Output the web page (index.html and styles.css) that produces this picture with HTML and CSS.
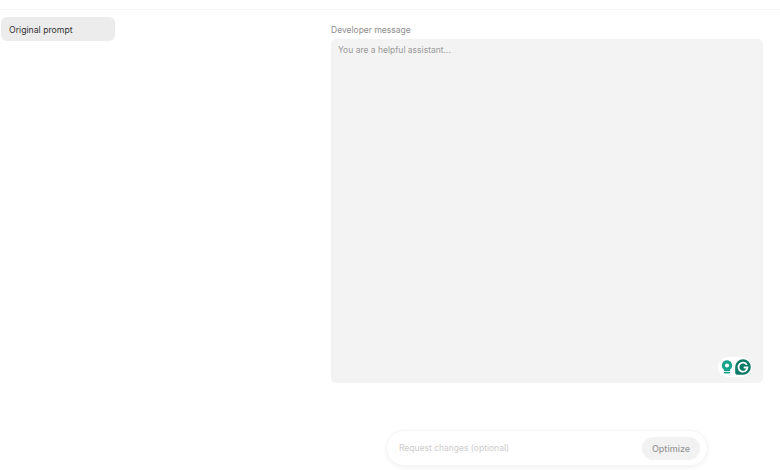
FILE: index.html
```html
<!DOCTYPE html>
<html lang="en">
<head>
<meta charset="utf-8">
<title>Optimize prompt</title>
<link rel="stylesheet" href="styles.css">
</head>
<body>
<div class="topbar"></div>
<main class="layout">
  <aside class="sidebar">
    <div class="tab">Original prompt</div>
  </aside>
  <section class="editor">
    <div class="label">Developer message</div>
    <div class="field">
      <div class="placeholder">You are a helpful assistant...</div>
      <div class="grammarly">
        <svg class="bulb" width="12" height="14" viewBox="0 0 12 14"><path d="M6 .3a5.200 5.200 0 0 0-3 9.400V11h6V9.700a5.200 5.200 0 0 0-3-9.400z" fill="#15a38c"/><circle cx="6" cy="5.500" r="2.100" fill="#fff"/><rect x="3" y="11.800" width="6" height="1.700" rx=".8" fill="#15a38c"/></svg>
        <svg class="gmark" width="16" height="16" viewBox="0 0 16 16"><path d="M8 .2a7.800 7.800 0 0 1 0 15.600H2.200a2 2 0 0 1-2-2V8A7.800 7.800 0 0 1 8 .2z" fill="#0c7a68"/><path d="M11.900 5.900A4.500 4.500 0 1 0 12.500 8.500H8.700" fill="none" stroke="#fff" stroke-width="1.800"/></svg>
      </div>
    </div>
  </section>
</main>
<div class="composer-row">
  <div class="composer">
    <span class="request">Request changes (optional)</span>
    <button class="optimize" type="button">Optimize</button>
  </div>
</div>
</body>
</html>
```

FILE: styles.css
```css
* { box-sizing: border-box; }
html, body { margin: 0; height: 100%; }
body {
  width: 780px;
  height: 470px;
  overflow: hidden;
  background: #fff;
  font-family: Inter, "Liberation Sans", sans-serif;
  font-size: 8.5px;
  display: flex;
  flex-direction: column;
}
.topbar { height: 10px; border-bottom: 1px solid #f5f5f5; flex: none; }
.layout {
  display: grid;
  grid-template-columns: 114px 432px;
  column-gap: 216px;
  padding: 7px 0 0 1px;
  flex: none;
}
.tab {
  height: 24px;
  line-height: 26px;
  padding-left: 8px;
  background: #ececec;
  border-radius: 6px;
  color: #333;
  font-size: 8.7px;
}
.editor { padding-top: 7px; }
.label { height: 15px; line-height: 12px; color: #8e8e8e; }
.field {
  height: 344px;
  background: #f3f3f3;
  border-radius: 5px;
  padding: 5px 7px;
  display: flex;
  flex-direction: column;
  justify-content: space-between;
}
.placeholder { line-height: 12px; color: #9a9a9a; }
.grammarly {
  align-self: flex-end;
  margin: 0 4px 1px 0;
  width: 34px;
  height: 20px;
  border-radius: 10px;
  background: #fff;
  display: flex;
  align-items: center;
  justify-content: flex-end;
  gap: 2px;
  padding-right: 1px;
}
.composer-row { padding: 47px 0 0 386px; flex: none; }
.composer {
  width: 322px;
  height: 36px;
  border: 1px solid #f6f6f6;
  border-radius: 18px;
  box-shadow: 0 2px 5px rgba(0, 0, 0, .05);
  display: flex;
  align-items: center;
  justify-content: space-between;
  padding: 0 7px 0 12px;
  background: #fff;
}
.request { color: #cccccc; }
.optimize {
  width: 58px;
  height: 23px;
  border: 0;
  border-radius: 12px;
  background: #f2f2f2;
  color: #999;
  font: 500 9px Inter, "Liberation Sans", sans-serif;
  padding: 0;
}
```
